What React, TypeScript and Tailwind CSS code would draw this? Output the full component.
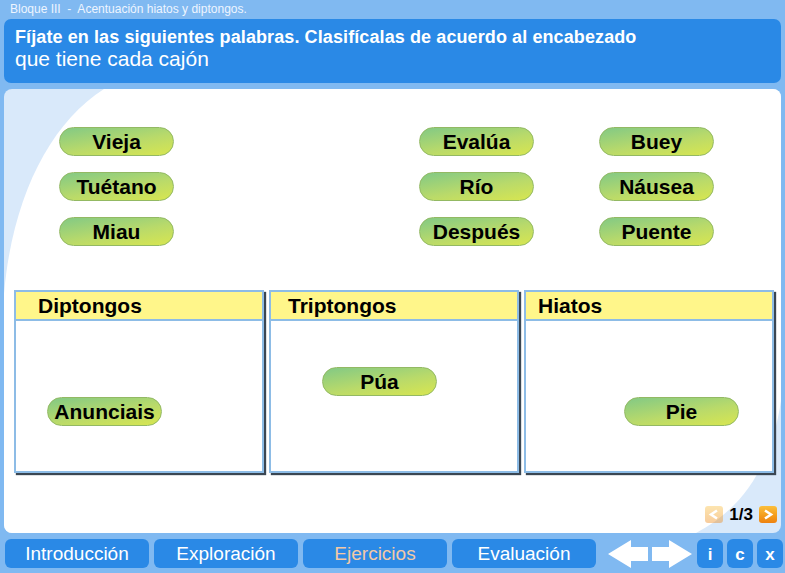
import React from "react";

function Chip({ label }: { label: string }) {
  return (
    <div className="w-[115px] h-[29px] shrink-0 rounded-full border border-[#93b963] bg-[linear-gradient(170deg,#82c985_0%,#b9da6a_55%,#d8e650_100%)] text-center text-[21px] font-bold leading-[27px] text-black">
      {label}
    </div>
  );
}

function Box({
  title,
  pad,
  chip,
  cx,
  cy,
}: {
  title: string;
  pad: string;
  chip: string;
  cx: number;
  cy: number;
}) {
  return (
    <div className="relative w-[250px] h-[183px] shrink-0 border-2 border-[#8dbce6] bg-white shadow-[2px_2px_1px_#3a4652]">
      <div className={`h-[29px] border-b-2 border-[#8dbce6] bg-[#fff68a] text-[21px] font-bold leading-[27px] text-black ${pad}`}>
        {title}
      </div>
      <div className="absolute" style={{ left: cx, top: cy }}>
        <Chip label={chip} />
      </div>
    </div>
  );
}

function PageBtn({ dir, faded }: { dir: "l" | "r"; faded?: boolean }) {
  return (
    <div
      className={`w-[18px] h-[17px] rounded-[3px] bg-[linear-gradient(180deg,#fbbf3c_0%,#f39a1a_60%,#ee8210_100%)] flex items-center justify-center ${faded ? "opacity-40" : ""}`}
    >
      <svg width="12" height="11" viewBox="0 0 12 11">
        {dir === "l" ? (
          <polyline points="9,1.5 3,5.5 9,9.5" fill="none" stroke="white" strokeWidth="2.6" strokeLinejoin="miter" />
        ) : (
          <polyline points="3,1.5 9,5.5 3,9.5" fill="none" stroke="white" strokeWidth="2.6" strokeLinejoin="miter" />
        )}
      </svg>
    </div>
  );
}

export default function App() {
  return (
    <div className="w-[785px] h-[573px] bg-[#80b9f1] flex flex-col font-['Liberation_Sans',Arial,sans-serif] overflow-hidden">
      <div className="h-[19px] px-[10px] text-[12px] leading-[19px] text-[#eef5ff]">
        Bloque III&nbsp; -&nbsp; Acentuación hiatos y diptongos.
      </div>
      <div className="mx-[4px] h-[64px] rounded-[7px] bg-[#2a89e6] px-[11px] pt-[8px] text-white">
        <div className="text-[18px] font-bold leading-[21px] tracking-[0.1px]">
          Fíjate en las siguientes palabras. Clasifícalas de acuerdo al encabezado
        </div>
        <div className="text-[21px] leading-[22px]">que tiene cada cajón</div>
      </div>
      <div className="relative mx-[4px] mt-[6px] h-[444px] rounded-[8px] overflow-hidden bg-[#d9e9fa]">
        <svg className="absolute inset-0" width="779" height="444" viewBox="0 0 779 444">
          <path
            d="M 0 205 C 8 110, 45 35, 100 0 L 779 0 L 779 295 C 772 370, 742 418, 692 444 L 0 444 Z"
            fill="white"
          />
        </svg>
        <div className="relative flex flex-col">
          <div className="flex pl-[55px] pt-[38px]">
            <div className="flex flex-col gap-[16px]">
              <Chip label="Vieja" />
              <Chip label="Tuétano" />
              <Chip label="Miau" />
            </div>
            <div className="ml-[245px] flex flex-col gap-[16px]">
              <Chip label="Evalúa" />
              <Chip label="Río" />
              <Chip label="Después" />
            </div>
            <div className="ml-[65px] flex flex-col gap-[16px]">
              <Chip label="Buey" />
              <Chip label="Náusea" />
              <Chip label="Puente" />
            </div>
          </div>
          <div className="mt-[44px] flex gap-[5px] pl-[10px]">
            <Box title="Diptongos" pad="pl-[22px]" chip="Anunciais" cx={31} cy={105} />
            <Box title="Triptongos" pad="pl-[17px]" chip="Púa" cx={51} cy={75} />
            <Box title="Hiatos" pad="pl-[12px]" chip="Pie" cx={98} cy={105} />
          </div>
          <div className="mt-[33px] flex items-center justify-end gap-[6px] pr-[4px]">
            <PageBtn dir="l" faded />
            <div className="text-[17px] font-bold leading-[17px] text-black">1/3</div>
            <PageBtn dir="r" />
          </div>
        </div>
      </div>
      <div className="mt-[6px] flex h-[29px] px-[5px]">
        <div className="flex gap-[5px]">
          {[
            ["Introducción", "text-white"],
            ["Exploración", "text-white"],
            ["Ejercicios", "text-[#f3c9a6]"],
            ["Evaluación", "text-white"],
          ].map(([t, c]) => (
            <div
              key={t}
              className={`w-[144px] h-[29px] rounded-[6px] bg-[#2a89e6] text-center text-[19px] leading-[29px] ${c}`}
            >
              {t}
            </div>
          ))}
        </div>
        <div className="ml-[12px] flex items-center gap-[2px]">
          <svg width="41" height="30" viewBox="0 0 41 30">
            <polygon points="0,15 23,1 23,8 40,8 40,22 23,22 23,29" fill="white" />
          </svg>
          <svg width="41" height="30" viewBox="0 0 41 30">
            <polygon points="41,15 18,1 18,8 1,8 1,22 18,22 18,29" fill="white" />
          </svg>
        </div>
        <div className="ml-[5px] flex gap-[4px]">
          {["i", "c", "x"].map((t) => (
            <div
              key={t}
              className="w-[26px] h-[29px] rounded-[6px] bg-[#2a89e6] text-center text-[17px] font-bold leading-[31px] text-white"
            >
              {t}
            </div>
          ))}
        </div>
      </div>
    </div>
  );
}
